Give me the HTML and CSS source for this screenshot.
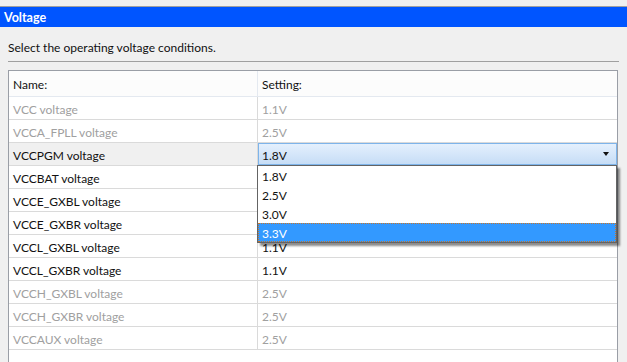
FILE: index.html
```html
<!DOCTYPE html>
<html lang="en">
<head>
  <meta charset="UTF-8">
  <title>Voltage</title>
  <link rel="stylesheet" href="styles.css">
</head>
<body>
  <div class="top-strip"></div>
  <div class="title-bar">Voltage</div>

  <div class="content">
    <div class="intro">Select the operating voltage conditions.</div>
    <div class="divider"></div>

    <div class="grid">
      <div class="row head">
        <div class="cell name">Name:</div>
        <div class="cell setting">Setting:</div>
      </div>

      <div class="row disabled">
        <div class="cell name">VCC voltage</div>
        <div class="cell setting">1.1V</div>
      </div>
      <div class="row disabled">
        <div class="cell name">VCCA_FPLL voltage</div>
        <div class="cell setting">2.5V</div>
      </div>
      <div class="row active">
        <div class="cell name">VCCPGM voltage</div>
        <div class="cell setting combo-cell">
          <div class="combo">
            <span>1.8V</span>
            <span class="arrow"></span>
          </div>
          <div class="dropdown">
            <div class="option">1.8V</div>
            <div class="option">2.5V</div>
            <div class="option">3.0V</div>
            <div class="option selected">3.3V</div>
          </div>
        </div>
      </div>
      <div class="row">
        <div class="cell name">VCCBAT voltage</div>
        <div class="cell setting"></div>
      </div>
      <div class="row">
        <div class="cell name">VCCE_GXBL voltage</div>
        <div class="cell setting"></div>
      </div>
      <div class="row">
        <div class="cell name">VCCE_GXBR voltage</div>
        <div class="cell setting"></div>
      </div>
      <div class="row">
        <div class="cell name">VCCL_GXBL voltage</div>
        <div class="cell setting">1.1V</div>
      </div>
      <div class="row">
        <div class="cell name">VCCL_GXBR voltage</div>
        <div class="cell setting">1.1V</div>
      </div>
      <div class="row disabled">
        <div class="cell name">VCCH_GXBL voltage</div>
        <div class="cell setting">2.5V</div>
      </div>
      <div class="row disabled">
        <div class="cell name">VCCH_GXBR voltage</div>
        <div class="cell setting">2.5V</div>
      </div>
      <div class="row disabled">
        <div class="cell name">VCCAUX voltage</div>
        <div class="cell setting">2.5V</div>
      </div>
      <div class="filler"></div>
    </div>
  </div>
</body>
</html>
```

FILE: styles.css
```css
body {
  font-family: 'Lato', sans-serif;
  font-size: 12px;
  background-color: #f0f0f0;
  color: #111;
  margin: 0;
  overflow: hidden;
}

.top-strip {
  height: 6px;
  border-bottom: 1px solid #a0a0a0;
}

.title-bar {
  height: 20px;
  line-height: 21px;
  background-color: #0055ff;
  color: #fff;
  font-weight: bold;
  font-size: 12.5px;
  padding-left: 4px;
}

.content {
  padding: 0 8px;
}

.intro {
  padding-top: 13px;
  height: 21px;
  line-height: 16px;
}

.divider {
  height: 1px;
  background-color: #a0a0a0;
}

.grid {
  margin-top: 8px;
  width: 608px;
  border: 1px solid #9a9ea6;
  border-bottom: none;
  background-color: #fff;
}

.row {
  display: grid;
  grid-template-columns: 249px 1fr;
  height: 23px;
  border-bottom: 1px solid #dadada;
  box-sizing: border-box;
}

.row.head {
  height: 26px;
  background-color: #fcfcfc;
  border-bottom: 1px solid #e4e9f0;
}

.row.head .name {
  border-right-color: #e4e9f0;
}

.cell {
  line-height: 19px;
  padding: 3px 0 0 4px;
  white-space: nowrap;
}

.row.head .cell {
  line-height: 25px;
  padding-top: 1px;
}

.cell.name {
  border-right: 1px solid #dadada;
}

.disabled .cell {
  color: #a0a0a0;
}

.active .name {
  background-color: #f0f0f0;
}

.combo-cell {
  position: relative;
  padding: 0;
}

.combo {
  height: 22px;
  box-sizing: border-box;
  border: 1px solid #7eb4ea;
  background: linear-gradient(#e4f0fd, #c6ddf6);
  display: flex;
  align-items: center;
  justify-content: space-between;
  padding: 2px 5px 0 3px;
}

.arrow {
  width: 0;
  height: 0;
  border-left: 3.5px solid transparent;
  border-right: 3.5px solid transparent;
  border-top: 4px solid #111;
  margin: -2px 2px 0 0;
}

.dropdown {
  position: absolute;
  top: 22px;
  left: -1px;
  right: 0;
  background-color: #fff;
  border: 1px solid #646464;
  box-shadow: 3px 3px 2px rgba(0, 0, 0, 0.45);
  z-index: 2;
}

.option {
  height: 19px;
  line-height: 19px;
  padding: 1px 0 0 4px;
  box-sizing: border-box;
}

.option.selected {
  background-color: #3399ff;
  color: #fff;
  outline: 1px dotted #c8762a;
  outline-offset: -1px;
}

.filler {
  height: 20px;
}
```
